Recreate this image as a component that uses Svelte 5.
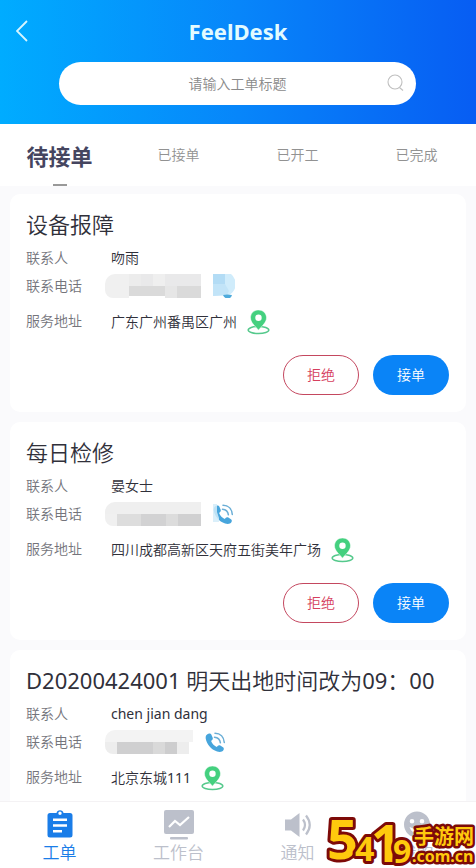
<script lang="ts">
  type Block = { x: number; y: number; w: number; h: number; fill: string };
  type Ticket = { title: string; contact: string; address: string; maskWidth: number; mask: Block[]; phoneMask: 'full' | 'edge' | 'none' };

  const tabs = ['待接单', '已接单', '已开工', '已完成'];
  const navs = [
    { id: 'ticket', label: '工单' },
    { id: 'desk', label: '工作台' },
    { id: 'notice', label: '通知' },
    { id: 'mine', label: '我的' },
  ];
  const tickets: Ticket[] = [
    {
      title: '设备报障', contact: '吻雨', address: '广东广州番禺区广州', maskWidth: 96, phoneMask: 'full',
      mask: [
        { x: 0, y: 0, w: 24, h: 24, fill: '#f0f0f0' },
        { x: 24, y: 0, w: 12, h: 12, fill: '#ececec' },
        { x: 36, y: 0, w: 60, h: 12, fill: '#e9e9ea' },
        { x: 48, y: 0, w: 12, h: 12, fill: '#efefef' },
        { x: 24, y: 12, w: 36, h: 10, fill: '#dadada' },
        { x: 60, y: 12, w: 12, h: 12, fill: '#e6e6e6' },
        { x: 72, y: 12, w: 24, h: 12, fill: '#dadada' },
      ],
    },
    {
      title: '每日检修', contact: '晏女士', address: '四川成都高新区天府五街美年广场', maskWidth: 96, phoneMask: 'edge',
      mask: [
        { x: 0, y: 0, w: 96, h: 12, fill: '#efefef' },
        { x: 0, y: 12, w: 12, h: 12, fill: '#f0f0f0' },
        { x: 12, y: 12, w: 24, h: 12, fill: '#dddddd' },
        { x: 36, y: 12, w: 25, h: 12, fill: '#d2d2d3' },
        { x: 61, y: 12, w: 12, h: 12, fill: '#dcdcdc' },
        { x: 73, y: 12, w: 23, h: 12, fill: '#d0d0d1' },
      ],
    },
    {
      title: 'D20200424001 明天出地时间改为09：00', contact: 'chen jian dang', address: '北京东城111', maskWidth: 88, phoneMask: 'none',
      mask: [
        { x: 0, y: 0, w: 88, h: 12, fill: '#f3f3f3' },
        { x: 0, y: 12, w: 84, h: 12, fill: '#ededed' },
        { x: 12, y: 12, w: 36, h: 12, fill: '#cfcfd0' },
        { x: 48, y: 12, w: 12, h: 12, fill: '#d9d9d9' },
        { x: 60, y: 12, w: 12, h: 12, fill: '#cdcdce' },
      ],
    },
  ];

  let activeTab = $state(0);
  let activeNav = $state('ticket');
  let keyword = $state('');
</script>

<div class="app">
  <header>
    <div class="topbar">
      <button class="back" aria-label="返回">
        <svg width="12" height="22" viewBox="0 0 12 22"><path d="M11 1 1 11l10 10" fill="none" stroke="#d6f5ff" stroke-width="1.8" /></svg>
      </button>
      <h1>FeelDesk</h1>
    </div>
    <div class="search">
      <input type="text" placeholder="请输入工单标题" aria-label="请输入工单标题" bind:value={keyword} />
      <button class="find" aria-label="搜索">
        <svg width="18" height="18" viewBox="0 0 18 18" fill="none" stroke="#bfbfbf" stroke-width="1.1"><circle cx="8" cy="8" r="7" /><path d="m12.500 13.500 3.500 3" /></svg>
      </button>
    </div>
  </header>

  <div class="tabs">
    {#each tabs as tab, i}
      <button class:active={i === activeTab} onclick={() => (activeTab = i)}>{tab}</button>
    {/each}
  </div>

  <main>
    {#each tickets as t}
      <article>
        <h2>{t.title}</h2>
        <dl>
          <dt>联系人</dt>
          <dd>{t.contact}</dd>
          <dt>联系电话</dt>
          <dd class="phone">
            <svg class="mask" width={t.maskWidth} height="24" shape-rendering="crispEdges">
              {#each t.mask as b}
                <rect x={b.x} y={b.y} width={b.w} height={b.h} fill={b.fill} />
              {/each}
            </svg>
            <svg width="24" height="24" viewBox="0 0 24 24">
              {#if t.phoneMask !== 'full'}
                <path d="M6 3.500C3.500 4.200 2.300 6 2.700 8.600c.9 5.500 5.300 11 11.400 13 2.600.8 5.200.6 6.400-1.500.6-1.100.4-2.200-.5-2.800l-2.700-1.700c-1-.6-2-.4-2.700.5l-.8 1c-2.300-1-4.700-3.500-5.700-6.100l1-.9c.8-.7.9-1.600.5-2.600L8.300 4.600C7.900 3.600 7 3.200 6 3.500z" fill="#47a5dc" />
                <path d="M12 3.200c5.300.1 8.900 3.800 9.300 9.300M11.500 7.200c3.300.2 5.500 2.300 5.900 5.600" fill="none" stroke="#6aaed6" stroke-width="1.500" stroke-linecap="round" />
              {:else}
                <path d="M2 0h12v10H2z" fill="#b3dcf5" />
                <path d="M14 0h6q4 3 5 10-1 8-7 11L2 22V10h12z" fill="#d0ecfb" />
                <path d="M2 10h12l4 7-2 4-14 1z" fill="#c2e4f8" />
                <path d="M12 21q4-1 9 0-1 4-5 3.500-3-.5-4-3.500z" fill="#4fabdc" />
              {/if}
              {#if t.phoneMask === 'edge'}
                <path d="M2 2h4v8l2 6v4H2z" fill="#d4ecf9" opacity=".85" />
              {/if}
            </svg>
          </dd>
          <dt class="place">服务地址</dt>
          <dd class="place">
            <span>{t.address}</span>
            <svg width="24" height="26" viewBox="0 0 24 26">
              <ellipse cx="11.500" cy="21" rx="10.300" ry="3.600" fill="none" stroke="#55c98c" stroke-width="1.500" />
              <path d="M11.500 1c-4.600 0-8 3.400-8 7.800 0 4.600 4.300 7.900 8 12.400 3.700-4.500 8-7.800 8-12.400 0-4.400-3.400-7.800-8-7.800z" fill="#44d07f" stroke="#fff" stroke-width=".5" />
              <circle cx="11.500" cy="8.700" r="3.200" fill="#fff" />
            </svg>
          </dd>
        </dl>
        <div class="actions">
          <button class="reject">拒绝</button>
          <button class="accept">接单</button>
        </div>
      </article>
    {/each}
  </main>

  <nav>
    {#each navs as n}
      <button class:on={n.id === activeNav} onclick={() => (activeNav = n.id)}>
        <svg width="32" height="32" viewBox="0 0 32 32" fill="currentColor">
          {#if n.id === 'ticket'}
            <path fill-rule="evenodd" d="M6 4h6.500a3.600 3.600 0 0 1 7 0H26q2.500 0 2.500 2.500v19.500q0 2.500-2.500 2.500H6q-2.500 0-2.500-2.500V6.500Q3.500 4 6 4zm10-1.400a1.700 1.700 0 1 0 0 3.400 1.700 1.700 0 0 0 0-3.400zM9 9.500V12h14V9.500zm0 5.800v2.500h14v-2.500zm0 5.700v2.500h9V21z" />
          {:else if n.id === 'desk'}
            <rect x="1" y="1" width="30" height="24" rx="2" />
            <rect x="7" y="28" width="18" height="2.500" rx="1" />
            <path d="m6 18 6-6 5 4 9-8" fill="none" stroke="#fff" stroke-width="2.200" />
          {:else if n.id === 'notice'}
            <path d="M3 10.500h6L17.500 4v24L9 21.500H3z" />
            <path d="M21 10.500q4 5.500 0 11M24 6.500q7.500 9.500 0 19" fill="none" stroke="currentColor" stroke-width="2.200" />
          {:else}
            <path fill-rule="evenodd" d="M16 2.500a13 13 0 1 0 0 26 13 13 0 0 0 0-26zM11 10a2.300 2.300 0 1 1 0 4.600A2.300 2.300 0 0 1 11 10zm10 0a2.300 2.300 0 1 1 0 4.600A2.300 2.300 0 0 1 21 10zM8.500 18q7.500 4 15 0-2 6-7.500 6t-7.500-6z" />
          {/if}
        </svg>
        <span>{n.label}</span>
      </button>
    {/each}
  </nav>

  <svg class="watermark" width="152" height="56" viewBox="0 0 152 56">
    <text x="3" y="47" font-size="54">5</text>
    <text x="31" y="49" font-size="34">4</text>
    <text x="47" y="50" font-size="52">1</text>
    <text x="69" y="51" font-size="32">9</text>
    <text class="name" x="90" y="32" font-size="20">手游网</text>
    <text class="name" x="88" y="50" font-size="16">.com.cn</text>
  </svg>
</div>

<style>
  :global(body){background:#fafafc}
  .app{position:relative;display:flex;flex-direction:column;height:100vh;overflow:hidden;background:#fafafc;color:#30303a;font:14px/28px "Noto Sans","Noto Sans CJK SC DemiLight","Noto Sans CJK SC",sans-serif}
  button{padding:0;border:0;background:none;color:inherit;font:inherit;cursor:pointer}
  svg{flex:none;display:block}
  h1,h2,dl,dd{margin:0}

  header{flex:none;padding-bottom:19px;background:linear-gradient(to right,#00acff,#0786fa 50%,#075df3)}
  .topbar{display:grid;grid-template-columns:44px 1fr 44px;align-items:center;height:62px}
  .back{justify-self:center}
  h1{color:#e2fbff;font-size:22px;line-height:28px;font-weight:700;text-align:center}
  .search{position:relative;margin:0 60px 0 59px}
  .search input{display:block;box-sizing:border-box;width:100%;height:43px;padding:0 44px;border:0;border-radius:22px;background:#fff;color:#30303a;font:inherit;text-align:center;outline:none}
  .search input::placeholder{color:#8a8a8a;opacity:1}
  .find{position:absolute;top:12px;right:11px}

  .tabs{flex:none;display:grid;grid-template-columns:repeat(4,1fr);height:62px;background:#fff}
  .tabs button{position:relative;color:#929292}
  .tabs .active{color:#45455f;font:700 22px/28px "Noto Sans CJK SC",sans-serif}
  .tabs .active::after{content:"";position:absolute;left:50%;bottom:0;width:14px;height:2px;margin-left:-7px;background:#999}

  main{flex:1;min-height:0;overflow:hidden;padding:8px 10px 0}
  article{margin-bottom:10px;padding:13px 17px 17px 16px;border-radius:10px;background:#fff}
  h2{margin-bottom:3px;font-size:22px;line-height:34px;font-weight:400;white-space:nowrap}
  dl{display:grid;grid-template-columns:85px 1fr}
  dt{color:#74747b}
  dd{display:flex;align-items:center;gap:10px;height:28px}
  dt.place{line-height:42px}
  dd.place{height:44px}
  .mask{margin-left:-6px;border-radius:10px 0 0 8px}
  .actions{display:flex;justify-content:flex-end;gap:14px;padding-top:11px}
  .actions button{box-sizing:border-box;width:76px;height:40px;border-radius:20px}
  .reject{border:1px solid #c4475f;color:#d63f5e}
  .accept{background:#0a84f7;color:#fff}

  nav{flex:none;display:grid;grid-template-columns:repeat(4,1fr);height:66px;background:#fff;border-top:1px solid #f4f2f4}
  nav button{display:flex;flex-direction:column;align-items:center;padding-top:7px;color:#bcc0cb;font-size:17px;line-height:24px}
  nav .on{color:#1a7de8}

  .watermark{position:absolute;right:0;bottom:0;overflow:visible}
  .watermark text{font-family:"Noto Sans","Noto Sans CJK SC",sans-serif;font-weight:700;fill:#ffc90d;stroke:#7d0a08;stroke-width:6px;stroke-linejoin:round;paint-order:stroke}
  .watermark .name{stroke-width:5px}
</style>
